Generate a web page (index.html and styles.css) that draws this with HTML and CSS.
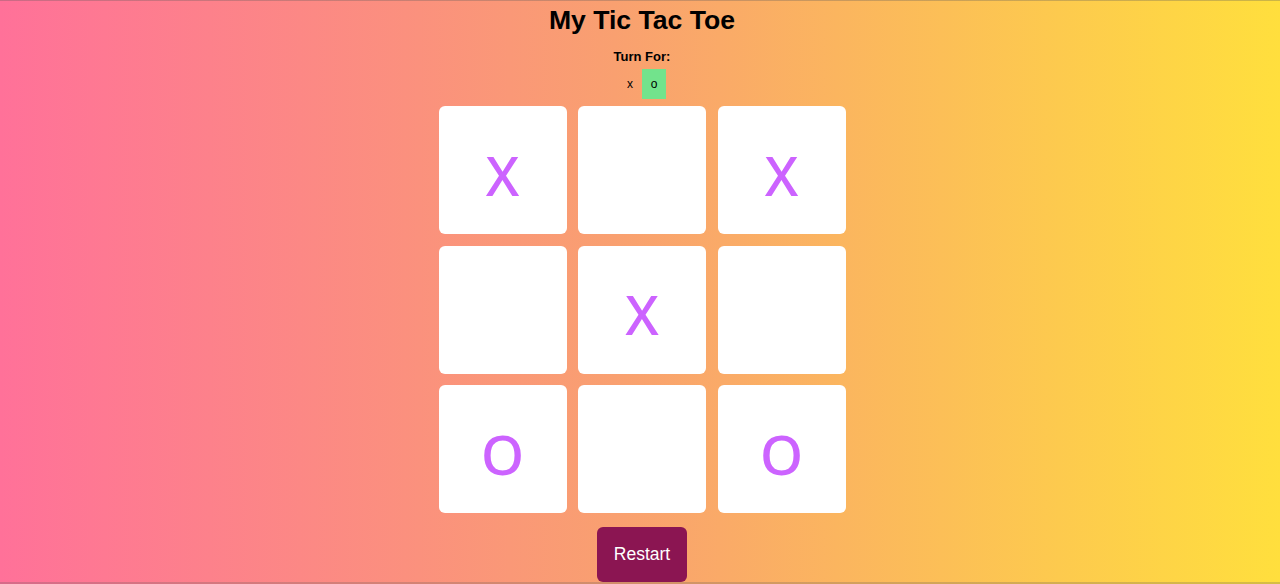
FILE: index.html
```html
<!DOCTYPE html>
<html lang="en">
<head>
<meta charset="utf-8">
<title>My Tic Tac Toe</title>
<link rel="stylesheet" href="styles.css">
</head>
<body>
<main class="game">
  <h1 class="title">My Tic Tac Toe</h1>
  <div class="turn-label">Turn For:</div>
  <div class="turn">
    <span class="turn-item">x</span>
    <span class="turn-item active">o</span>
  </div>
  <div class="board">
    <div class="cell">X</div>
    <div class="cell"></div>
    <div class="cell">X</div>
    <div class="cell"></div>
    <div class="cell">X</div>
    <div class="cell"></div>
    <div class="cell">O</div>
    <div class="cell"></div>
    <div class="cell">O</div>
  </div>
  <button class="restart">Restart</button>
</main>
</body>
</html>
```

FILE: styles.css
```css
html, body {
  margin: 0;
  padding: 0;
  height: 100%;
}
body {
  box-sizing: border-box;
  height: 584px;
  background: linear-gradient(to right, #ff7199, #f9a070 48%, #ffdf3d);
  border-top: 1px solid rgba(90, 90, 90, 0.3);
  border-bottom: 2px solid rgba(90, 90, 90, 0.25);
  font-family: "Liberation Sans", Arial, sans-serif;
  color: #000;
}
.game {
  display: flex;
  flex-direction: column;
  align-items: center;
  padding-left: 4px;
  padding-top: 3px;
}
.title {
  margin: 0;
  font-size: 26.6px;
  font-weight: bold;
  line-height: 32px;
}
.turn-label {
  margin-top: 13px;
  font-size: 13px;
  font-weight: bold;
  line-height: 16px;
}
.turn {
  display: flex;
  margin-top: 4px;
}
.turn-item {
  width: 24px;
  height: 30px;
  display: flex;
  align-items: center;
  justify-content: center;
  font-size: 12px;
}
.turn-item.active {
  background: #72e38c;
}
.board {
  margin-top: 7px;
  display: grid;
  grid-template-columns: repeat(3, 128px);
  grid-auto-rows: 128px;
  gap: 11.5px;
}
.cell {
  background: #fff;
  border-radius: 6px;
  display: flex;
  align-items: center;
  justify-content: center;
  padding-top: 8px;
  box-sizing: border-box;
  font-family: "Noto Sans", "Open Sans", sans-serif;
  font-weight: 500;
  font-size: 55px;
  line-height: 1;
  color: #cc63ff;
}
.restart {
  margin-top: 14px;
  width: 90px;
  height: 55px;
  border: none;
  border-radius: 6px;
  background: #8b1552;
  color: #fff;
  font-family: "Liberation Sans", Arial, sans-serif;
  font-size: 17.5px;
  padding: 0;
}
```
